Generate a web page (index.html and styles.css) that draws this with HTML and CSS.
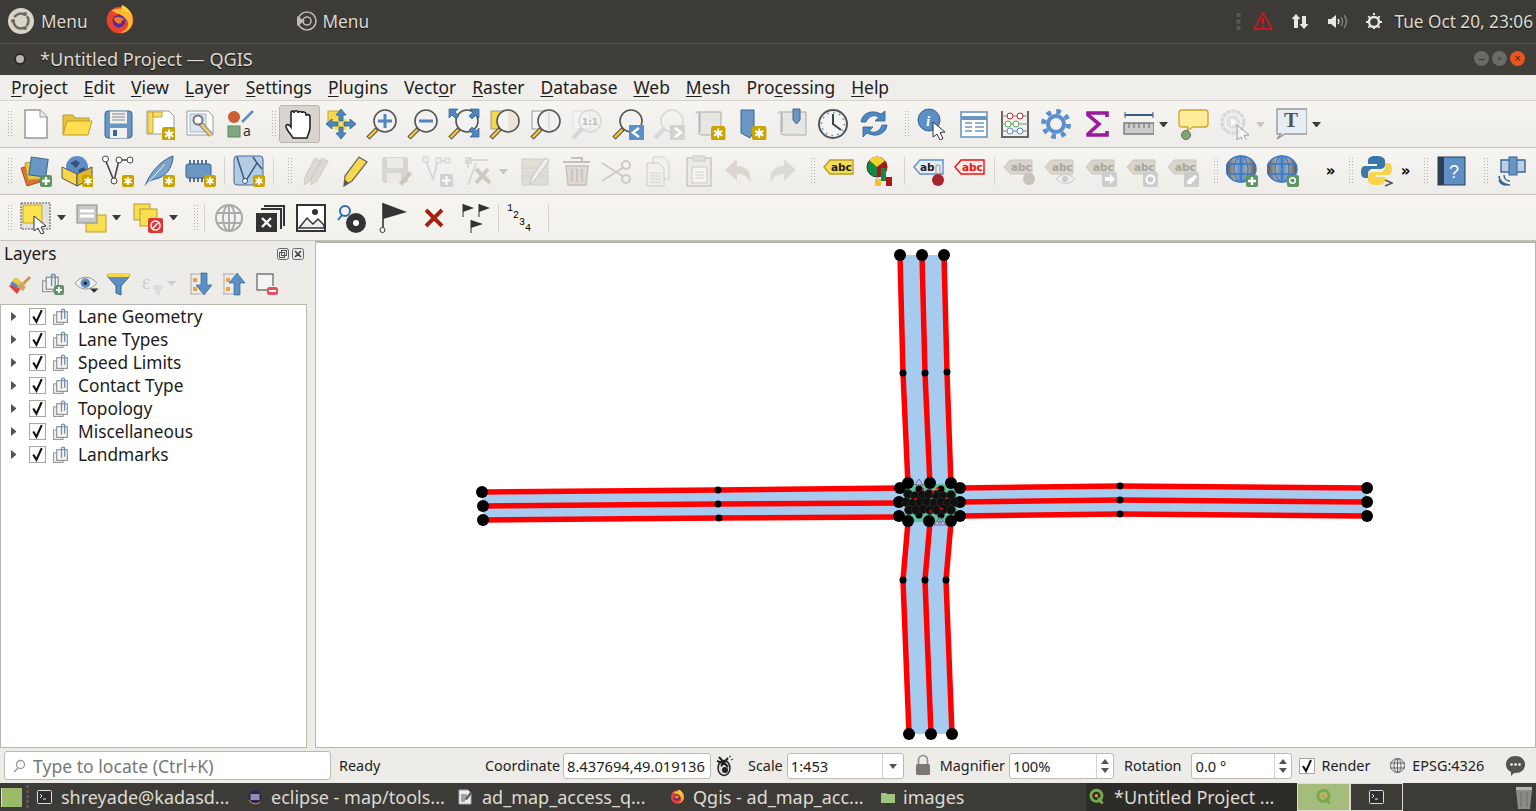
FILE: index.html
```html
<!DOCTYPE html>
<html lang="en">
<head>
<meta charset="utf-8">
<title>QGIS</title>
<link rel="stylesheet" href="styles.css">
</head>
<body>
<svg class="defs" width="0" height="0">
  <defs>
    <linearGradient id="gl" x1="0" x2="1" y1="0" y2="0"><stop offset="0" stop-color="#555"/><stop offset=".3" stop-color="#aaa"/><stop offset=".5" stop-color="#4f8bd0"/><stop offset=".7" stop-color="#aaa"/><stop offset="1" stop-color="#555"/></linearGradient>
    <g id="star"><rect x="0" y="0" width="12" height="12" rx="2" fill="#c9a400"/><path d="M6 2v8M2.500 4l7 4M9.500 4l-7 4" stroke="#fff" stroke-width="1.600"/><circle cx="6" cy="6" r="2" fill="#fff"/></g>
    <g id="mag"><path d="M2 30l9-9" stroke="#333" stroke-width="4.500"/><path d="M2.500 29.500l8-8" stroke="#f0c040" stroke-width="2.600"/><circle cx="19" cy="13" r="11" fill="#f2f2f0" stroke="#555" stroke-width="1.600"/></g>
    <g id="magoff" opacity=".45"><path d="M2 30l9-9" stroke="#bbb" stroke-width="4"/><circle cx="19" cy="13" r="11" fill="#f2f2f0" stroke="#bbb" stroke-width="1.600"/></g>
    <g id="abc"><path d="M1 12l6-7h22v14H7z" fill="#d8d5cc" stroke="#ccc8be"/><text x="8" y="16" class="tag-text" fill="#a8a59c">abc</text></g>
    <g id="grip"><path d="M.5 0v26M3.500 0v26" stroke="#b5b2ab" stroke-width="1" stroke-dasharray="1 2"/></g>
    <g id="globe"><ellipse cx="15" cy="14" rx="15" ry="13" fill="url(#gl)" stroke="#3b78c4" stroke-width="1.400"/><path d="M1 9h28M1 19h28M15 1v26" stroke="#3b78c4" stroke-width="1.300"/><ellipse cx="15" cy="14" rx="7" ry="13" fill="none" stroke="#3b78c4" stroke-width="1.200"/></g>
    <g id="ptr"><path d="M0 0l0 15 4-3 3 6 3-1.500-3-6 5-.5z" fill="#fff" stroke="#333" stroke-width="1"/></g>
    <g id="layerclip"><rect x=".5" y="6.500" width="9" height="9" fill="#eee" stroke="#999"/><rect x="3.500" y="3.500" width="10" height="10" fill="#f4f4f2" stroke="#888"/><path d="M8 11V2.500a1.500 1.500 0 0 1 3 0V10" fill="none" stroke="#6a8fb5" stroke-width="1.200"/></g>
    <g id="check"><rect x=".5" y=".5" width="15" height="15" fill="#fff" stroke="#aaa7a0"/><path d="M4 8l3 5 5-11" fill="none" stroke="#111" stroke-width="2"/></g>
    <g id="q"><circle cx="7.500" cy="7" r="5" fill="none" stroke="#78a94a" stroke-width="2.600"/><path d="M9 9l4 5" stroke="#78a94a" stroke-width="2.600"/><circle cx="7.500" cy="7" r="1.600" fill="#e8902a"/></g>
    <g id="term"><rect x=".5" y=".5" width="14" height="13" rx="1" fill="#2e2e2e" stroke="#ddd"/><path d="M3 4l2 2-2 2M6 9h3" stroke="#eee" fill="none"/></g>
    <g id="fox"><circle cx="14" cy="15" r="12.500" fill="#e8432e"/><path d="M6 6c6-3 13-3 19 5 3 8-2 16-11 16 6-2 9-6 7-11-1-3-4-3-7-3 2-2 0-4-3-4z" fill="#fcb831"/><path d="M16 1c5 2 9 7 10 12-2-4-5-6-8-6-3-1-3-4-2-6z" fill="#ffd43b"/><circle cx="13" cy="16" r="6" fill="#5a2a9a"/><path d="M8 14c3-3 8-2 10 1-2 0-3 1-3 3-2 1-5 0-7-4z" fill="#f57a1f"/></g>
  </defs>
</svg>

<header class="panel">
  <div class="panel-left">
    <span class="ubuntu"><svg width="26" height="26" viewBox="0 0 26 26"><circle cx="13" cy="13" r="13" fill="#d8d4c9"/><circle cx="13" cy="13" r="7.500" fill="none" stroke="#6b685f" stroke-width="2.500"/><path d="M13 13L2 9M13 13l8-9M13 13l7 9" stroke="#d8d4c9" stroke-width="2.500"/><circle cx="5" cy="13" r="2" fill="#6b685f"/><circle cx="17" cy="6" r="2" fill="#6b685f"/><circle cx="17" cy="20" r="2" fill="#6b685f"/></svg></span>
    <span class="panel-text">Menu</span>
    <svg class="panel-fox" width="30" height="32" viewBox="0 0 28 30"><use href="#fox"/></svg>
    <span class="panel-mid">
      <svg width="21" height="20" viewBox="0 0 21 20"><circle cx="11" cy="10" r="9" fill="none" stroke="#bdb9ae" stroke-width="1.600"/><circle cx="11" cy="10" r="4" fill="none" stroke="#bdb9ae" stroke-width="1.600"/><path d="M1 5l8 5-8 5z" fill="#bdb9ae"/></svg>
      <span class="panel-text">Menu</span>
    </span>
  </div>
  <div class="panel-right">
    <svg class="grip-v" width="5" height="17" viewBox="0 0 5 17"><path d="M2.500 0v17" stroke="#5a5851" stroke-width="4" stroke-dasharray="4 2.500"/></svg>
    <svg width="20" height="18" viewBox="0 0 20 18"><path d="M10 1L1 17h18z" fill="none" stroke="#e8101c" stroke-width="1.500"/><path d="M10 6v6M10 13.500v2" stroke="#e8101c" stroke-width="2"/></svg>
    <svg width="18" height="17" viewBox="0 0 18 17"><path d="M5 1l4.500 5H7v9H3V6H.5zM13 16l4.500-5H15V3h-4v8H8.500z" fill="#e8e6e0"/></svg>
    <svg width="21" height="17" viewBox="0 0 21 17"><path d="M1 6h3l5-4v13l-5-4H1z" fill="#e8e6e0"/><path d="M11 6c1 1.500 1 3.500 0 5" stroke="#e8e6e0" stroke-width="1.500" fill="none"/><path d="M14 4c2 3 2 6 0 9M17 2c3 4 3 9 0 13" stroke="#8a877e" stroke-width="1.300" fill="none"/></svg>
    <svg width="16" height="17" viewBox="0 0 16 17"><circle cx="8" cy="9" r="5" fill="none" stroke="#e8e6e0" stroke-width="2.400"/><path d="M8 0v17M0 9h16M2.300 3.300l11.400 11.400M13.700 3.300L2.300 14.700" stroke="#e8e6e0" stroke-width="2" stroke-dasharray="2 12"/></svg>
    <span class="panel-text clock">Tue Oct 20, 23:06</span>
  </div>
</header>

<div class="titlebar">
  <span class="title-dot"></span>
  <span class="title-text">*Untitled Project — QGIS</span>
  <span class="winbtns"><i class="winbtn">–</i><i class="winbtn">▫</i><i class="winbtn close">×</i></span>
</div>

<nav class="menubar">
  <span><u>P</u>roject</span><span><u>E</u>dit</span><span><u>V</u>iew</span><span><u>L</u>ayer</span><span><u>S</u>ettings</span><span><u>P</u>lugins</span><span>Vect<u>o</u>r</span><span><u>R</u>aster</span><span><u>D</u>atabase</span><span><u>W</u>eb</span><span><u>M</u>esh</span><span>Pro<u>c</u>essing</span><span><u>H</u>elp</span>
</nav>

<div class="toolbar tb1">
  <svg class="grip start" width="4" height="26" viewBox="0 0 4 26"><use href="#grip"/></svg>
  <span class="b"><svg viewBox="0 0 32 32"><path d="M5 2h15l7 7v21H5z" fill="#fff" stroke="#999" stroke-width="1.500"/><path d="M20 2v7h7" fill="#eee" stroke="#999"/></svg></span>
  <span class="b"><svg viewBox="0 0 32 32"><path d="M2 26V7h10l2 3h14v4" fill="#e8c040" stroke="#b89c30"/><path d="M2 27l4-14h25l-4 14z" fill="#ffdf50" stroke="#b89c30"/></svg></span>
  <span class="b"><svg viewBox="0 0 32 32"><rect x="3" y="3" width="27" height="27" rx="3" fill="#6a96c4" stroke="#3a6590"/><rect x="8" y="3.500" width="17" height="12" fill="#f0f0f0"/><path d="M10 6h13M10 9h13M10 12h13" stroke="#888"/><rect x="8" y="20" width="17" height="10" fill="#f0f0f0"/><rect x="11" y="22" width="4" height="6" fill="#3a6590"/></svg></span>
  <span class="b"><svg viewBox="0 0 32 32"><path d="M4 3h22l5 5v18H4z" fill="#fff" stroke="#999"/><path d="M5 4h5v21H5zM10 4h9v5h-9z" fill="#f7dd6a" stroke="#c8a830"/><use href="#star" transform="translate(19 19) scale(1.200)"/></svg></span>
  <span class="b"><svg viewBox="0 0 32 32"><path d="M3 3h21l5 5v19H3z" fill="#fff" stroke="#999"/><rect x="6" y="6" width="16" height="18" fill="#dbe6f3" stroke="#9cb5d2"/><path d="M15 14l12 13" stroke="#888" stroke-width="5"/><path d="M15 14l12 13" stroke="#e8cb70" stroke-width="3"/><circle cx="14" cy="12" r="4.500" fill="#fff" stroke="#777" stroke-width="2"/></svg></span>
  <span class="b"><svg viewBox="0 0 32 32"><circle cx="9" cy="9" r="6" fill="#c8602f"/><path d="M17 14L28 3" stroke="#5d8fc0" stroke-width="2.500"/><rect x="3" y="18" width="12" height="11" fill="#7fa97f" stroke="#5e865e"/><text x="18" y="28" class="a-text">a</text></svg></span>
  <svg class="grip" width="4" height="26" viewBox="0 0 4 26"><use href="#grip"/></svg>
  <span class="b on"><svg viewBox="0 0 32 32"><path d="M9 30c-2-4-7-8-7-12 0-2 3-2 5 1V5c0-2.500 3-2.500 3 0 0-3 4-3 4 0 0-2 4-2 4 0 0-2 4-1 4 1v2c0-2 4-2 4 1v10c0 5-2 7-3 11z" fill="#fff" stroke="#222" stroke-width="1.600"/></svg></span>
  <span class="b"><svg viewBox="0 0 32 32"><rect x="3" y="3" width="13" height="13" fill="#f4d84a" stroke="#c4a830"/><rect x="9" y="11" width="13" height="11" fill="#ffe24d"/><path d="M16 1l5 6h-3v6h-4V7h-3zM16 31l5-6h-3v-6h-4v6h-3zM1 16l6-5v3h6v4H7v3zM31 16l-6-5v3h-6v4h6v3z" fill="#4f86c0" stroke="#2e5f92" stroke-width=".8"/></svg></span>
  <span class="b"><svg viewBox="0 0 32 32"><use href="#mag"/><path d="M12 13h14M19 6v14" stroke="#4f86c0" stroke-width="3"/></svg></span>
  <span class="b"><svg viewBox="0 0 32 32"><use href="#mag"/><path d="M12 13h14" stroke="#4f86c0" stroke-width="3"/></svg></span>
  <span class="b"><svg viewBox="0 0 32 32"><use href="#mag"/><path d="M1 1h9L7 4l4 4-3 3-4-4-3 3zM31 1h-9l3 3-4 4 3 3 4-4 3 3zM31 29h-9l3-3-4-4 3-3 4 4 3-3z" fill="#4f86c0" stroke="#2e5f92" stroke-width=".7"/></svg></span>
  <span class="b"><svg viewBox="0 0 32 32"><rect x="2" y="3" width="17" height="18" fill="#f4d84a" stroke="#999"/><use href="#mag"/><path d="M19 3a10 10 0 0 1 0 20z" fill="#e8e5d4"/></svg></span>
  <span class="b"><svg viewBox="0 0 32 32"><rect x="2" y="3" width="17" height="18" fill="#f4f4f2" stroke="#999"/><use href="#mag"/><path d="M19 4v18" stroke="#ccc"/></svg></span>
  <span class="b"><svg viewBox="0 0 32 32"><rect x="2" y="3" width="17" height="18" fill="#f4f4f2" stroke="#ddd"/><use href="#magoff"/><text x="11" y="17" class="small-bold" fill="#bbb">1:1</text></svg></span>
  <span class="b"><svg viewBox="0 0 32 32"><use href="#mag"/><rect x="17" y="17" width="15" height="15" fill="#5a8fc8"/><path d="M27 20l-6 4.500 6 4.500" fill="none" stroke="#fff" stroke-width="2.400"/></svg></span>
  <span class="b"><svg viewBox="0 0 32 32"><use href="#magoff"/><rect x="17" y="17" width="15" height="15" fill="#d5d3cd"/><path d="M22 20l6 4.500-6 4.500" fill="none" stroke="#fff" stroke-width="2.400"/></svg></span>
  <span class="b"><svg viewBox="0 0 32 32"><path d="M5 4h22v23H9c-4 0-5-2-4-4z" fill="#e6e6e3" stroke="#aaa"/><path d="M2 6c0-3 4-3 4 0v18" fill="none" stroke="#aaa"/><use href="#star" transform="translate(17 18) scale(1.200)"/></svg></span>
  <span class="b"><svg viewBox="0 0 32 32"><path d="M6 2h13v21l-4 7-9-5z" fill="#6a96c4" stroke="#3a6590"/><use href="#star" transform="translate(17 18) scale(1.200)"/></svg></span>
  <span class="b"><svg viewBox="0 0 32 32"><path d="M5 4h25v23H9c-4 0-5-2-4-4z" fill="#e6e6e3" stroke="#aaa"/><path d="M2 6c0-3 4-3 4 0v18" fill="none" stroke="#aaa"/><path d="M17 1h7v11l-3.500 4-3.500-4z" fill="#6a96c4" stroke="#3a6590"/></svg></span>
  <span class="b"><svg viewBox="0 0 32 32"><circle cx="16" cy="16" r="14" fill="#f4f4f2" stroke="#555" stroke-width="2"/><path d="M16 6v10l8 6" fill="none" stroke="#444" stroke-width="2"/><circle cx="16" cy="16" r="11.500" fill="none" stroke="#5a8fc8" stroke-width="1.600" stroke-dasharray="1.500 4.500"/></svg></span>
  <span class="b"><svg viewBox="0 0 32 32"><path d="M3 14C4 5 14 1 23 6l4-3v10H17l4-4c-6-3-11 0-13 5zM29 17c-1 9-11 13-20 8l-4 4V19h10l-4 4c6 3 11 0 13-6z" fill="#4f86c8" stroke="#2e5f92" stroke-width=".8"/></svg></span>
  <svg class="grip" width="4" height="26" viewBox="0 0 4 26"><use href="#grip"/></svg>
  <span class="b"><svg viewBox="0 0 32 32"><circle cx="12" cy="12" r="11" fill="#5b8fc6" stroke="#3a6590"/><text x="9" y="18" class="info-text">i</text><use href="#ptr" transform="translate(16 14)"/></svg></span>
  <span class="b"><svg viewBox="0 0 32 32"><rect x="3" y="4" width="26" height="25" fill="#fff" stroke="#6a96c4" stroke-width="1.600"/><path d="M3 10h26" stroke="#6a96c4" stroke-width="4"/><path d="M7 15h7M17 15h9M7 19h7M17 19h9M7 23h7M17 23h9" stroke="#6a96c4" stroke-width="1.600"/></svg></span>
  <span class="b"><svg viewBox="0 0 32 32"><path d="M3 3v26M29 3v26M2 29h28" stroke="#666" stroke-width="2"/><path d="M3 8h26M3 16h26M3 23h26" stroke="#888"/><circle cx="11" cy="8" r="3" fill="#fff" stroke="#b22"/><circle cx="21" cy="8" r="3" fill="#fff" stroke="#b22"/><circle cx="9" cy="16" r="3" fill="#fff" stroke="#5a5"/><circle cx="17" cy="16" r="3" fill="#fff" stroke="#5a5"/><circle cx="11" cy="23" r="3" fill="#fff" stroke="#58c"/><circle cx="21" cy="23" r="3" fill="#fff" stroke="#58c"/></svg></span>
  <span class="b"><svg viewBox="0 0 32 32"><circle cx="16" cy="16" r="8" fill="none" stroke="#5b8fd0" stroke-width="4"/><circle cx="16" cy="16" r="12.500" fill="none" stroke="#5b8fd0" stroke-width="5" stroke-dasharray="4.500 5.300"/></svg></span>
  <span class="b"><svg viewBox="0 0 32 32"><path d="M26 9V5H7v2l11 9-11 10v1h19v-4" fill="none" stroke="#9a1a9a" stroke-width="3.600"/></svg></span>
  <span class="b"><svg viewBox="0 0 32 32"><path d="M3 7h28" stroke="#3b5c80" stroke-width="2"/><path d="M3 4v6M31 4v6" stroke="#3b5c80"/><rect x="2" y="15" width="30" height="11" fill="#ccc" stroke="#777" stroke-width="1.400"/><path d="M7 15v5M12 15v5M17 15v5M22 15v5M27 15v5" stroke="#666"/></svg></span><i class="caret"></i>
  <span class="b"><svg viewBox="0 0 32 32"><path d="M4 2h23a3 3 0 0 1 3 3v11a3 3 0 0 1-3 3H15l-6 4 1-4H4a3 3 0 0 1-3-3V5a3 3 0 0 1 3-3z" fill="#ffec9a" stroke="#cbaa2c" stroke-width="1.400"/><circle cx="8" cy="27" r="4.500" fill="#7ea86e" stroke="#666"/></svg></span>
  <span class="b"><svg viewBox="0 0 32 32" opacity=".7"><circle cx="14" cy="14" r="11" fill="#eee" stroke="#ccc" stroke-width="3" stroke-dasharray="4 1"/><circle cx="14" cy="14" r="6" fill="#ddd" stroke="#ccc"/><path d="M12 10l6 4-6 4z" fill="#fff"/><use href="#ptr" transform="translate(18 17)" opacity=".6"/></svg></span><i class="caret off"></i>
  <span class="b"><svg viewBox="0 0 32 32"><path d="M2 1h30v25H10l-8 5 4-5H2z" fill="#e6eef5" stroke="#999" stroke-width="1.400"/><text x="9" y="19" class="t-text">T</text></svg></span><i class="caret"></i>
</div>

<div class="toolbar tb2">
  <svg class="grip start" width="4" height="26" viewBox="0 0 4 26"><use href="#grip"/></svg>
  <span class="b"><svg viewBox="0 0 32 32"><path d="M1 13l14-4 5 18-13 4z" fill="#d97332" stroke="#a55420"/><path d="M5 8l13-2 3 18-13 1z" fill="#e8c84a" stroke="#b89c30"/><rect x="10" y="3" width="17" height="18" transform="rotate(8 18 12)" fill="#6a96c4" stroke="#3a6590"/><rect x="20" y="20" width="12" height="12" rx="2" fill="#5f9464"/><path d="M26 22v8M22 26h8" stroke="#fff" stroke-width="2.400"/></svg></span>
  <span class="b"><svg viewBox="0 0 32 32"><circle cx="16" cy="12" r="11" fill="#5f8ec4"/><path d="M9 8l6-3 4 3-4 5zM17 15l6-3 2 4-5 4z" fill="#33547c"/><path d="M1 12l15 7v12L1 23z" fill="#f4d84a" stroke="#555"/><path d="M31 12l-15 7v12l15-8z" fill="#e0b830" stroke="#555"/><use href="#star" transform="translate(21 20)"/></svg></span>
  <span class="b"><svg viewBox="0 0 32 32"><path d="M3 4l9 22L17 5l10 0" fill="none" stroke="#444" stroke-width="1.600"/><circle cx="3.500" cy="4" r="3" fill="#fff" stroke="#444"/><circle cx="12" cy="26" r="3" fill="#fff" stroke="#444"/><circle cx="17" cy="5" r="3" fill="#fff" stroke="#444"/><circle cx="28" cy="5" r="3" fill="#fff" stroke="#444"/><use href="#star" transform="translate(20 20)"/></svg></span>
  <span class="b"><svg viewBox="0 0 32 32"><path d="M2 31C6 20 16 6 30 1c0 8-4 18-14 22-4 1-8 2-11 4z" fill="#7ba2c8" stroke="#3a6590"/><path d="M2 31L22 9" stroke="#e8f0f8"/><use href="#star" transform="translate(20 20)"/></svg></span>
  <span class="b"><svg viewBox="0 0 32 32"><rect x="2" y="9" width="25" height="14" rx="2" fill="#6a96c4" stroke="#3a6590"/><path d="M6 5v4M10 5v4M14 5v4M18 5v4M22 5v4M6 23v4M10 23v4M14 23v4M18 23v4" stroke="#33547c" stroke-width="1.600"/><use href="#star" transform="translate(20 20)"/></svg></span>
  <i class="sep"></i>
  <span class="b"><svg viewBox="0 0 32 32"><rect x="1" y="1" width="29" height="29" rx="3" fill="#b4cbe2" stroke="#446b93"/><path d="M4 2l8 25L24 8 20 2M24 8l5 6" fill="none" stroke="#33547c" stroke-width="1.400"/><circle cx="12" cy="26" r="2.500" fill="#fff" stroke="#33547c"/><use href="#star" transform="translate(20 20)"/></svg></span>
  <i class="sep"></i>
  <svg class="grip" width="4" height="26" viewBox="0 0 4 26"><use href="#grip"/></svg>
  <span class="b dim tight"><svg viewBox="0 0 32 32"><path d="M4 30l1-8L15 3l6 3-11 20zM11 30l1-8L22 3l6 3-11 20z" fill="#d8d5ce" stroke="#c8c5be"/></svg></span>
  <span class="b"><svg viewBox="0 0 32 32"><path d="M5 31l1-10L20 2l8 5-15 19z" fill="#f7d94c" stroke="#6b6b60" stroke-width="1.300"/><path d="M5 31l1-6 4 3z" fill="#555"/></svg></span>
  <span class="b dim"><svg viewBox="0 0 32 32"><rect x="2" y="2" width="26" height="26" rx="3" fill="#d4d2cc"/><rect x="7" y="3" width="16" height="10" fill="#eceae6"/><rect x="7" y="18" width="14" height="10" fill="#eceae6"/><path d="M19 28l10-12 3 3-10 12z" fill="#c8c0b6"/></svg></span>
  <span class="b dim"><svg viewBox="0 0 32 32"><path d="M4 4l8 20 5-18h12" fill="none" stroke="#ccc" stroke-width="1.500"/><rect x="2" y="2" width="5" height="5" fill="#eee" stroke="#ccc"/><rect x="15" y="3" width="5" height="5" fill="#eee" stroke="#ccc"/><rect x="24" y="3" width="5" height="5" fill="#eee" stroke="#ccc"/><rect x="19" y="19" width="13" height="13" rx="2" fill="#ccc"/><path d="M25.500 21v9M21 25.500h9" stroke="#fff" stroke-width="2"/></svg></span>
  <span class="b dim"><svg viewBox="0 0 32 32"><path d="M6 5h20M6 5v8M4 3h5v5H4zM6 30l8-22" fill="none" stroke="#ccc" stroke-width="1.400"/><path d="M14 14l14 14M26 14L14 28" stroke="#c8c4bc" stroke-width="4"/></svg></span><i class="caret off"></i>
  <span class="b dim"><svg viewBox="0 0 32 32"><rect x="3" y="4" width="26" height="8" fill="#dedbd0" stroke="#ccc"/><rect x="3" y="13" width="26" height="8" fill="#dedbd0" stroke="#ccc"/><rect x="3" y="22" width="26" height="8" fill="#dedbd0" stroke="#ccc"/><path d="M10 30l3-8L26 3l4 3-14 19z" fill="#eee" stroke="#bbb"/></svg></span>
  <span class="b dim"><svg viewBox="0 0 32 32"><path d="M6 11h22l-2 19H8z" fill="#ddd5cf" stroke="#c0b6b0" stroke-width="1.400"/><path d="M3 7h27M11 3h11v4" fill="none" stroke="#c0b6b0" stroke-width="2"/><path d="M12 14v13M17 14v13M22 14v13" stroke="#c0b6b0" stroke-width="1.600"/></svg></span>
  <span class="b dim"><svg viewBox="0 0 32 32"><path d="M1 8l22 14M1 26l22-14" stroke="#c8c5be" stroke-width="2"/><circle cx="25" cy="10" r="4" fill="none" stroke="#c8c5be" stroke-width="2"/><circle cx="25" cy="24" r="4" fill="none" stroke="#c8c5be" stroke-width="2"/></svg></span>
  <span class="b dim"><svg viewBox="0 0 32 32"><path d="M11 2h11l5 5v17H11z" fill="#f2f0ec" stroke="#ccc"/><path d="M5 8h12l5 5v18H5z" fill="#f2f0ec" stroke="#c8c5be"/><path d="M8 18h11M8 21h11M8 24h11M8 27h11" stroke="#ccc"/></svg></span>
  <span class="b dim"><svg viewBox="0 0 32 32"><rect x="4" y="3" width="24" height="28" fill="#eceae6" stroke="#c8c5be" stroke-width="1.600"/><rect x="10" y="1" width="12" height="5" fill="#ddd" stroke="#c8c5be"/><path d="M9 12h15v16H9z" fill="#f6f5f2" stroke="#c8c5be"/><path d="M12 17h9M12 20h9M12 23h9" stroke="#ccc"/></svg></span>
  <span class="b dim"><svg viewBox="0 0 32 32"><path d="M13 4v7c9 0 15 5 13 17-2-7-6-9-13-9v7L1 15z" fill="#d8d2cc"/></svg></span>
  <span class="b dim"><svg viewBox="0 0 32 32"><path d="M19 4v7c-9 0-15 5-13 17 2-7 6-9 13-9v7l12-11z" fill="#d6d6d2"/></svg></span>
  <svg class="grip near" width="4" height="26" viewBox="0 0 4 26"><use href="#grip"/></svg>
  <span class="b"><svg viewBox="0 0 32 32"><path d="M1 12l6-7h23v14H7z" fill="#f4df50" stroke="#b89c30" stroke-width="1.400"/><text x="8" y="16" class="tag-text" fill="#222">abc</text></svg></span>
  <span class="b"><svg viewBox="0 0 32 32"><circle cx="13" cy="12" r="10" fill="#118a44" stroke="#333"/><path d="M13 12L5 5a10 10 0 0 1 16 1z" fill="#f4d030"/><path d="M13 12l8-6a10 10 0 0 1-8 16z" fill="#a81a1a"/><rect x="17" y="13" width="5" height="13" fill="#118a44"/><rect x="11" y="24" width="6" height="7" fill="#f4c030"/><rect x="22" y="22" width="6" height="9" fill="#a81a1a"/></svg></span>
  <i class="sep"></i>
  <span class="b"><svg viewBox="0 0 32 32"><path d="M1 12l6-7h23v14H7z" fill="#e6eef8" stroke="#5b8fd0" stroke-width="1.400"/><text x="7" y="16" class="tag-text" fill="#222">ab</text><path d="M23 20v-8a2 2 0 0 1 4 0v8" fill="none" stroke="#aaa" stroke-width="1.400"/><circle cx="25" cy="25" r="6" fill="#a8232d"/></svg></span>
  <span class="b"><svg viewBox="0 0 32 32"><path d="M1 12l6-7h23v14H7z" fill="#fdeaea" stroke="#f01010" stroke-width="1.400"/><text x="8" y="16" class="tag-text" fill="#f01010">abc</text></svg></span>
  <i class="sep"></i>
  <span class="b"><svg viewBox="0 0 32 32"><use href="#abc"/><circle cx="26" cy="24" r="6" fill="#c8c0ba"/></svg></span>
  <span class="b"><svg viewBox="0 0 32 32"><use href="#abc"/><path d="M12 24c6-6 13-6 19 0-6 6-13 6-19 0z" fill="#f0eeea" stroke="#ccc"/><circle cx="21" cy="24" r="3" fill="#ccc"/></svg></span>
  <span class="b"><svg viewBox="0 0 32 32"><use href="#abc"/><rect x="17" y="17" width="15" height="15" rx="2" fill="#ccc"/><path d="M20 22h5v-3l5 5-5 5v-3h-5z" fill="#fff"/></svg></span>
  <span class="b"><svg viewBox="0 0 32 32"><use href="#abc"/><rect x="17" y="17" width="15" height="15" rx="2" fill="#ccc"/><circle cx="24.500" cy="24.500" r="4" fill="none" stroke="#fff" stroke-width="2"/></svg></span>
  <span class="b"><svg viewBox="0 0 32 32"><use href="#abc"/><rect x="17" y="17" width="15" height="15" rx="2" fill="#ccc"/><path d="M20 29l1-4 7-5 2 2-6 7z" fill="#fff"/></svg></span>
  <svg class="grip" width="4" height="26" viewBox="0 0 4 26"><use href="#grip"/></svg>
  <span class="b"><svg viewBox="0 0 32 32"><use href="#globe"/><rect x="20" y="20" width="12" height="12" rx="2" fill="#5f9464"/><path d="M26 22v8M22 26h8" stroke="#fff" stroke-width="2.400"/></svg></span>
  <span class="b"><svg viewBox="0 0 32 32"><use href="#globe"/><rect x="20" y="20" width="12" height="12" rx="2" fill="#5f9464"/><circle cx="25.500" cy="25.500" r="2.800" fill="none" stroke="#fff" stroke-width="1.500"/></svg></span>
  <span class="more first">»</span>
  <svg class="grip near" width="4" height="26" viewBox="0 0 4 26"><use href="#grip"/></svg>
  <span class="b"><svg viewBox="0 0 32 32"><path d="M15 1c-6 0-8 2-8 5v3h9v2H4c-3 0-4 3-4 6s1 6 4 6h3v-4c0-3 2-5 5-5h7c3 0 5-2 5-4V6c0-3-3-5-9-5z" fill="#3b77a8"/><path d="M16 30c6 0 8-2 8-5v-3h-9v-2h12c3 0 4-3 4-6s-1-6-4-6h-3v4c0 3-2 5-5 5h-7c-3 0-5 2-5 4v4c0 3 3 5 9 5z" fill="#f8d44c"/><path d="M24 25l7 3-7 3" fill="none" stroke="#555" stroke-width="1.500"/></svg></span>
  <span class="more">»</span>
  <svg class="grip near" width="4" height="26" viewBox="0 0 4 26"><use href="#grip"/></svg>
  <span class="b"><svg viewBox="0 0 32 32"><rect x="2" y="2" width="27" height="28" fill="#5f8fc4" stroke="#2b3f55"/><rect x="2" y="2" width="6" height="28" fill="#2b3f55"/><text x="13" y="23" class="q-text">?</text></svg></span>
  <svg class="grip far" width="4" height="26" viewBox="0 0 4 26"><use href="#grip"/></svg>
  <span class="b"><svg viewBox="0 0 32 32"><path d="M4 5h24v12H4z" fill="#b9d0e6" stroke="#3a6590" stroke-width="1.400"/><rect x="12" y="2" width="8" height="18" fill="#6a96c4" stroke="#3a6590"/><path d="M2 21c0 5 5 9 11 9M2 25c1 3 4 5 8 5M7 20c0 4 3 6 6 6" fill="none" stroke="#3a6590" stroke-width="1.500"/></svg></span>
</div>

<div class="toolbar tb3">
  <svg class="grip start" width="4" height="26" viewBox="0 0 4 26"><use href="#grip"/></svg>
  <span class="b"><svg viewBox="0 0 32 32"><rect x="1" y="1" width="29" height="26" fill="#e4e2de" stroke="#555" stroke-dasharray="2 1"/><rect x="3" y="3" width="19" height="18" fill="#fae34f" stroke="#c4a830"/><path d="M14 14v15l4-3 3 6 3-1-3-6 5-1z" fill="#fff" stroke="#333"/></svg></span><i class="caret pull"></i>
  <span class="b"><svg viewBox="0 0 32 32"><rect x="11" y="13" width="20" height="17" fill="#f7df50" stroke="#b89c30"/><rect x="2" y="3" width="20" height="18" fill="#c8c8c8" stroke="#888"/><path d="M5 9h14M5 14h14" stroke="#fff" stroke-width="3"/></svg></span><i class="caret"></i>
  <span class="b"><svg viewBox="0 0 32 32"><rect x="2" y="2" width="16" height="16" fill="#f7df50" stroke="#b89c30"/><rect x="8" y="7" width="17" height="17" fill="#f7df50" stroke="#b89c30"/><rect x="16" y="16" width="15" height="15" rx="2" fill="#e03535"/><circle cx="23.500" cy="23.500" r="4.500" fill="none" stroke="#fff" stroke-width="1.500"/><path d="M20 27l7-7" stroke="#fff" stroke-width="1.500"/></svg></span><i class="caret"></i>
  <svg class="grip wide-r" width="4" height="26" viewBox="0 0 4 26"><use href="#grip"/></svg>
  <i class="sep after"></i>
  <span class="b"><svg viewBox="0 0 32 32"><circle cx="16" cy="16" r="13" fill="none" stroke="#aaa" stroke-width="2"/><ellipse cx="16" cy="16" rx="6" ry="13" fill="none" stroke="#aaa" stroke-width="2"/><path d="M3 11h26M3 21h26M16 3v26" stroke="#aaa" stroke-width="2"/></svg></span>
  <span class="b"><svg viewBox="0 0 32 32"><path d="M10 4h20v20M7 7h20v20" fill="none" stroke="#333" stroke-width="2"/><rect x="2" y="11" width="21" height="19" fill="#333"/><path d="M8 16l9 9M17 16l-9 9" stroke="#fff" stroke-width="2.400"/></svg></span>
  <span class="b"><svg viewBox="0 0 32 32"><rect x="2" y="3" width="28" height="26" fill="#fff" stroke="#333" stroke-width="2"/><path d="M4 26l8-10 6 6 5-5 6 6v3H4z" fill="#ededed" stroke="#333" stroke-width="1.500"/><circle cx="20" cy="10" r="3" fill="#333"/></svg></span>
  <span class="b"><svg viewBox="0 0 32 32"><circle cx="20" cy="21" r="10" fill="#333"/><circle cx="20" cy="21" r="3" fill="#fff"/><circle cx="9" cy="9" r="5" fill="none" stroke="#2e6bb0" stroke-width="2"/><path d="M6 13l-4 5" stroke="#2e6bb0" stroke-width="2"/></svg></span>
  <span class="b"><svg viewBox="0 0 32 32"><path d="M6 1v28" stroke="#333" stroke-width="1.600"/><path d="M6 1l24 9-24 7z" fill="#333"/><circle cx="5.500" cy="28" r="2.500" fill="#fff" stroke="#333"/></svg></span>
  <span class="b"><svg viewBox="0 0 32 32"><path d="M8 8l16 16M24 8L8 24" stroke="#fff" stroke-width="6.500"/><path d="M8 8l16 16M24 8L8 24" stroke="#a6200e" stroke-width="4"/></svg></span>
  <span class="b"><svg viewBox="0 0 32 32"><path d="M4 2v13M20 2v13M12 18v13" stroke="#333"/><path d="M4 2l11 4-11 4zM20 2l11 4-11 4zM12 18l12 4-12 4z" fill="#333"/></svg></span>
  <i class="sep flush"></i>
  <span class="b"><svg viewBox="0 0 32 32"><text x="3" y="9" class="num-text">1</text><text x="9" y="16" class="num-text">2</text><text x="15" y="23" class="num-text">3</text><text x="21" y="29" class="num-text">4</text></svg></span>
  <i class="sep wide-l"></i>
</div>

<main class="workspace">
  <aside class="dock">
    <div class="dock-head">
      <span>Layers</span>
      <span class="dock-btns"><svg width="12" height="12" viewBox="0 0 12 12"><rect x=".5" y=".5" width="11" height="11" rx="2" fill="none" stroke="#666"/><rect x="4.500" y="2.500" width="5" height="5" fill="none" stroke="#555"/><rect x="2.500" y="4.500" width="5" height="5" fill="none" stroke="#555"/></svg><svg width="12" height="12" viewBox="0 0 12 12"><rect x=".5" y=".5" width="11" height="11" rx="2" fill="none" stroke="#666"/><path d="M3 3l6 6M9 3l-6 6" stroke="#444" stroke-width="1.600"/></svg></span>
    </div>
    <div class="dock-tools">
      <svg viewBox="0 0 24 24"><path d="M1 14l6-5 6 7-4 6z" fill="#e04040"/><path d="M2 12l5-6 6 6-4 4z" fill="#4a90d0"/><path d="M4 9l4-4 6 5-3 4z" fill="#f0c840"/><path d="M9 15l4-5 5 5-3 4z" fill="#d0a468"/><path d="M15 12l7-7" stroke="#c89858" stroke-width="3"/></svg>
      <svg viewBox="0 0 24 24"><g transform="translate(1 1) scale(1.200)"><use href="#layerclip"/></g><rect x="13" y="13" width="10" height="10" rx="2" fill="#5f9464"/><path d="M18 15v6M15 18h6" stroke="#fff" stroke-width="2"/></svg>
      <svg class="w" viewBox="0 0 32 24"><path d="M1 11c7-9 18-9 25 0-7 9-18 9-25 0z" fill="#f2f2f0" stroke="#888"/><circle cx="13" cy="11" r="5.500" fill="#5b8fc6"/><circle cx="13" cy="11" r="2" fill="#222"/><path d="M18 17h10l-5 5z" fill="#333"/></svg>
      <svg viewBox="0 0 24 24"><path d="M1 2h21v3l-8 9v9l-5-2v-7L1 5z" fill="#5b8fc6" stroke="#3a6590"/><rect x="1" y="1" width="21" height="4" fill="#f4d84a"/></svg>
      <svg class="w off" viewBox="0 0 36 24"><text x="1" y="17" class="eps-text">ε</text><path d="M12 13h10v3l-3 3v4h-4v-4l-3-3z" fill="#ddd"/><path d="M26 9h9l-4.500 5z" fill="#ccc"/></svg>
      <svg viewBox="0 0 24 24"><path d="M1 2h11M1 22h11M2 2v20" stroke="#aaa" fill="none"/><rect x="4" y="6" width="4" height="4" fill="#f0a040"/><rect x="4" y="15" width="4" height="4" fill="#f0a040"/><path d="M12 1h6v12h5l-8 10-8-10h5z" fill="#5b8fc6" stroke="#3a6590" stroke-width=".7"/></svg>
      <svg viewBox="0 0 24 24"><path d="M1 2h11M1 22h11M2 2v20" stroke="#aaa" fill="none"/><rect x="4" y="6" width="4" height="4" fill="#f0a040"/><rect x="4" y="15" width="4" height="4" fill="#f0a040"/><path d="M12 23h6V11h5L15 1 7 11h5z" fill="#5b8fc6" stroke="#3a6590" stroke-width=".7"/></svg>
      <svg viewBox="0 0 24 24"><path d="M17 18H2V2h16v12" fill="#f4f4f2" stroke="#777" stroke-width="1.400"/><rect x="12" y="15" width="11" height="8" rx="2.500" fill="#e85060"/><path d="M14 19h7" stroke="#fff" stroke-width="2"/></svg>
    </div>
    <ul class="tree">
      <li><i class="arrow"></i><svg class="cb" viewBox="0 0 16 16"><use href="#check"/></svg><svg class="lay" viewBox="0 0 16 16"><use href="#layerclip"/></svg><span>Lane Geometry</span></li>
      <li><i class="arrow"></i><svg class="cb" viewBox="0 0 16 16"><use href="#check"/></svg><svg class="lay" viewBox="0 0 16 16"><use href="#layerclip"/></svg><span>Lane Types</span></li>
      <li><i class="arrow"></i><svg class="cb" viewBox="0 0 16 16"><use href="#check"/></svg><svg class="lay" viewBox="0 0 16 16"><use href="#layerclip"/></svg><span>Speed Limits</span></li>
      <li><i class="arrow"></i><svg class="cb" viewBox="0 0 16 16"><use href="#check"/></svg><svg class="lay" viewBox="0 0 16 16"><use href="#layerclip"/></svg><span>Contact Type</span></li>
      <li><i class="arrow"></i><svg class="cb" viewBox="0 0 16 16"><use href="#check"/></svg><svg class="lay" viewBox="0 0 16 16"><use href="#layerclip"/></svg><span>Topology</span></li>
      <li><i class="arrow"></i><svg class="cb" viewBox="0 0 16 16"><use href="#check"/></svg><svg class="lay" viewBox="0 0 16 16"><use href="#layerclip"/></svg><span>Miscellaneous</span></li>
      <li><i class="arrow"></i><svg class="cb" viewBox="0 0 16 16"><use href="#check"/></svg><svg class="lay" viewBox="0 0 16 16"><use href="#layerclip"/></svg><span>Landmarks</span></li>
    </ul>
  </aside>
  <div class="splitter"></div>
  <section class="canvas">
    <svg class="map" viewBox="315 243 1221 505" preserveAspectRatio="none">
      <path d="M900 255h44l3 117 4 111 9 5 160-2 247 2v28l-247-2-160 2-9 6-5 58 6 154h-43l-6-154 5-58-9-5-180 1-236 2-1-28 236-2 182-2 8-3-5-112z" fill="#a6cbef"/>
      <path d="M905 484h52v38h-52z" fill="#5cc3a0"/>
      <g fill="none" stroke="#ff0000" stroke-width="5.500">
        <path d="M900 255l3 118 5 112M922 255l3 118 5 112M944 255l3 118 4 112"/>
        <path d="M909 734l-6-154 5-58M931 734l-6-154 5-58M952 734l-6-154 5-58"/>
        <path d="M482 492l236-2 182-2M483 506l235-2 181-1M483 520l236-2 180-1"/>
        <path d="M960 488l160-2 247 2M960 502l160-2 247 2M960 516l160-2 247 2"/>
      </g>
      <g fill="#000">
        <circle cx="900" cy="255" r="6"/><circle cx="922" cy="255" r="6"/><circle cx="944" cy="255" r="6"/>
        <circle cx="903" cy="373" r="3.500"/><circle cx="925" cy="373" r="3.500"/><circle cx="947" cy="372" r="3.500"/>
        <circle cx="903" cy="580" r="3.500"/><circle cx="925" cy="580" r="3.500"/><circle cx="946" cy="580" r="3.500"/>
        <circle cx="909" cy="734" r="6"/><circle cx="931" cy="734" r="6"/><circle cx="952" cy="734" r="6"/>
        <circle cx="482" cy="492" r="6"/><circle cx="483" cy="506" r="6"/><circle cx="483" cy="520" r="6"/>
        <circle cx="718" cy="490" r="3.500"/><circle cx="718" cy="504" r="3.500"/><circle cx="719" cy="518" r="3.500"/>
        <circle cx="1120" cy="486" r="3.500"/><circle cx="1120" cy="500" r="3.500"/><circle cx="1120" cy="514" r="3.500"/>
        <circle cx="1367" cy="488" r="6"/><circle cx="1367" cy="502" r="6"/><circle cx="1367" cy="516" r="6"/>
        <circle cx="908" cy="483" r="6"/><circle cx="930" cy="483" r="6"/><circle cx="951" cy="483" r="6"/>
        <circle cx="900" cy="488" r="6"/><circle cx="899" cy="502" r="6"/><circle cx="899" cy="516" r="6"/>
        <circle cx="960" cy="488" r="6"/><circle cx="960" cy="502" r="6"/><circle cx="960" cy="516" r="6"/>
        <circle cx="908" cy="521" r="6"/><circle cx="929" cy="521" r="6"/><circle cx="951" cy="521" r="6"/>
        <circle cx="919" cy="489" r="3.500"/><circle cx="941" cy="489" r="3.500"/><circle cx="919" cy="515" r="3.500"/><circle cx="941" cy="515" r="3.500"/>
      </g>
      <g fill="#101010" stroke="#333" stroke-width=".6">
        <circle cx="908" cy="494" r="4.500"/><circle cx="915" cy="496" r="4.500"/><circle cx="922" cy="495" r="4.500"/><circle cx="929" cy="494" r="4.500"/><circle cx="936" cy="495" r="4.500"/><circle cx="943" cy="496" r="4.500"/><circle cx="951" cy="495" r="4.500"/>
        <circle cx="906" cy="502" r="4.500"/><circle cx="913" cy="503" r="4.500"/><circle cx="920" cy="502" r="4.500"/><circle cx="927" cy="502" r="4.500"/><circle cx="934" cy="503" r="4.500"/><circle cx="941" cy="502" r="4.500"/><circle cx="948" cy="503" r="4.500"/><circle cx="954" cy="502" r="4.500"/>
        <circle cx="909" cy="510" r="4.500"/><circle cx="916" cy="510" r="4.500"/><circle cx="923" cy="509" r="4.500"/><circle cx="930" cy="510" r="4.500"/><circle cx="937" cy="510" r="4.500"/><circle cx="944" cy="509" r="4.500"/><circle cx="951" cy="510" r="4.500"/>
      </g>
      <g fill="none" stroke="#e01010" stroke-width="1.500">
        <path d="M923 488v3M932 490l2 4M930 510l2 4M914 499h3M945 498h3M940 508l3 1M936 488l3 1"/>
      </g>
      <g fill="none" stroke="#8a5a9a" stroke-width="1">
        <path d="M919 479l4 6h-8zM940 517l6 8h-12zM940 521l2 2h-4z"/>
      </g>
    </svg>
  </section>
</main>

<footer class="status">
  <label class="locator"><svg width="13" height="14" viewBox="0 0 13 14"><circle cx="7.500" cy="5.500" r="4" fill="none" stroke="#9a9a96" stroke-width="1.300"/><path d="M5 9l-4 4" stroke="#9a9a96" stroke-width="1.500"/></svg><span>Type to locate (Ctrl+K)</span></label>
  <span class="ready">Ready</span>
  <span class="lbl coord-l">Coordinate</span>
  <span class="field coord">8.437694,49.019136</span>
  <svg class="mouse" width="20" height="22" viewBox="0 0 20 22"><ellipse cx="9" cy="13" rx="6" ry="7.500" fill="#ddd" stroke="#222" stroke-width="1.500"/><circle cx="10" cy="15" r="3" fill="#222"/><path d="M4 2l9 10M13 3L6 11M2 6l8 3" stroke="#222" stroke-width="2"/><path d="M14 2l2-1M16 5l2-1" stroke="#222"/></svg>
  <span class="lbl">Scale</span>
  <span class="field scale"><span>1:453</span><i class="combo"></i></span>
  <svg class="lock" width="16" height="23" viewBox="0 0 16 23"><path d="M3.500 11V6a4.500 4.500 0 0 1 9 0v5" fill="none" stroke="#8e8c86" stroke-width="1.600"/><rect x="1" y="10" width="14" height="11" rx="1.500" fill="#7a7873"/></svg>
  <span class="lbl">Magnifier</span>
  <span class="field spin magn"><span>100%</span><i class="spinner"></i></span>
  <span class="lbl rot">Rotation</span>
  <span class="field spin rota"><span>0.0 °</span><i class="spinner"></i></span>
  <svg class="rcb" width="16" height="16" viewBox="0 0 16 16"><use href="#check"/></svg>
  <span class="lbl render">Render</span>
  <svg class="crs" width="17" height="17" viewBox="0 0 17 17"><circle cx="8.500" cy="8.500" r="7" fill="none" stroke="#666"/><ellipse cx="8.500" cy="8.500" rx="3.500" ry="7" fill="none" stroke="#666"/><path d="M1 6h15M1 11h15M8.500 1v15" stroke="#666"/></svg>
  <span class="lbl epsg">EPSG:4326</span>
  <svg class="msg" width="21" height="21" viewBox="0 0 21 21"><path d="M10.500 1c5.500 0 9.500 3.500 9.500 8.500S16 18 10.500 18H9l-3 3v-4C3 15.500 1 13 1 9.500 1 4.500 5 1 10.500 1z" fill="#55534e"/><circle cx="6.500" cy="9.500" r="1.300" fill="#fff"/><circle cx="10.500" cy="9.500" r="1.300" fill="#fff"/><circle cx="14.500" cy="9.500" r="1.300" fill="#fff"/></svg>
</footer>

<footer class="taskbar">
  <span class="showdesk"></span>
  <svg class="tgrip" width="5" height="24" viewBox="0 0 5 24"><path d="M2.500 0v24" stroke="#5a5851" stroke-width="3" stroke-dasharray="3 2"/></svg>
  <span class="task t1"><svg width="15" height="14" viewBox="0 0 15 14"><use href="#term"/></svg><span class="nm">shreyade@kadasd...</span></span>
  <span class="task t2"><svg width="14" height="16" viewBox="0 0 14 16"><circle cx="7" cy="8" r="6.500" fill="#2c2255"/><path d="M2.500 6h9M2.500 8h9M2.500 10h9" stroke="#f7f7ff" stroke-width="1"/><path d="M1 11c2 4 8 5 11 2" stroke="#f7941e" fill="none"/></svg><span class="nm">eclipse - map/tools...</span></span>
  <span class="task t3"><svg width="14" height="16" viewBox="0 0 14 16"><path d="M1 1h9l3 3v11H1z" fill="#eee" stroke="#aaa"/><path d="M3 6h6M3 8h6M3 10h5M3 12h4" stroke="#555"/><path d="M7 10l5-7 2 1-5 7z" fill="#5a5a50"/></svg><span class="nm">ad_map_access_q...</span></span>
  <span class="task t4"><svg width="15" height="16" viewBox="0 0 28 30"><use href="#fox"/></svg><span class="nm">Qgis - ad_map_acc...</span></span>
  <span class="task t5"><svg width="14" height="12" viewBox="0 0 14 12"><path d="M0 2h5l1 1h8v9H0z" fill="#a3c47e"/></svg><span class="nm">images</span></span>
  <span class="task active"><svg width="18" height="19" viewBox="0 0 16 17"><use href="#q"/></svg><span class="nm">*Untitled Project ...</span></span>
  <span class="ws ws-on"><svg width="18" height="19" viewBox="0 0 16 17"><use href="#q"/></svg></span>
  <span class="ws"><svg width="15" height="14" viewBox="0 0 15 14"><use href="#term"/></svg></span>
  <span class="trash"><svg width="18" height="24" viewBox="0 0 18 24"><path d="M1 4h16l-2 20H3z" fill="#8d8b85"/><path d="M1 2h16v3H1z" fill="#b7b5ae"/><path d="M6 7v15M12 7v15" stroke="#6e6c66"/></svg></span>
</footer>
</body>
</html>
```

FILE: styles.css
```css
* { box-sizing: border-box; }
html, body { margin: 0; padding: 0; }
body {
  width: 1536px; height: 811px; overflow: hidden;
  font-family: "Noto Sans", "Open Sans", sans-serif;
  background: #f0eeea; color: #1c1c1c;
  display: flex; flex-direction: column;
}
.defs { position: absolute; }
.panel {
  height: 44px; flex: none; background: #3c3b37; border-bottom: 1px solid #55534e;
  display: flex; justify-content: space-between; align-items: center; color: #dfdbd2;
  padding-bottom: 1px;
}
.panel-left { display: flex; align-items: center; padding-left: 8px; }
.ubuntu { display: flex; }
.panel-text { font-size: 17.200px; color: #dfdbd2; text-shadow: 0 1px 1px #111; }
.panel-left > .panel-text { margin-left: 7px; }
.panel-fox { margin-left: 17px; margin-top: -2px; }
.panel-mid { display: flex; align-items: center; gap: 6px; margin-left: 161px; }
.panel-right { display: flex; align-items: center; gap: 18px; padding-right: 3px; }
.grip-v { margin-right: -6px; }
.clock { margin-left: -5px; }
.titlebar {
  height: 31px; flex: none; background: #403e39;
  display: flex; align-items: center; padding: 0 0 2px 16px; color: #dfdbd2;
}
.title-dot { width: 8px; height: 8px; border-radius: 50%; background: #b9b7b0; box-shadow: 0 0 0 2px #2c2b28; }
.title-text { margin-left: 16px; font-size: 18.100px; flex: 1; text-shadow: 0 1px 1px #111; }
.winbtns { display: flex; gap: 3px; padding-right: 11px; }
.winbtn { width: 15px; height: 15px; border-radius: 50%; background: #6b6a65; color: #2e2d2a; font: 11px/15px "Liberation Sans", sans-serif; text-align: center; }
.winbtn.close { background: #e95420; }
.menubar {
  height: 26px; flex: none; background: #f0eeea; border-bottom: 1px solid #d6d3cc;
  display: flex; align-items: center; padding: 0 0 2px 11px; gap: 16px; font-size: 17.400px; color: #1c1c1c;
}
.menubar u { text-underline-offset: 2px; }
.toolbar {
  height: 47px; flex: none; display: flex; align-items: center; padding-left: 8px;
  background: linear-gradient(#f7f5f1, #eeece8); border-bottom: 1px solid #c4c1bb;
}
.tb3 { height: 46px; background: linear-gradient(#f6f4f0, #f3f1ec); }
.grip { flex: none; margin: 0 3px 0 11px; }
.grip.start { margin-left: 0; }
.grip.near { margin-left: 10px; }
.grip.far { margin: 0 4px 0 12px; }
.grip.wide-r { margin: 0 6px 0 10px; }
.b { width: 41px; height: 38px; flex: none; display: flex; align-items: center; justify-content: center; border: 1px solid transparent; border-radius: 3px; }
.b svg { width: 32px; height: 32px; flex: none; }
.b.on { background: #d8d5cf; border-color: #b9b6af; }
.b.dim svg { opacity: .85; }
.b.tight { margin-right: -2px; }
.caret { width: 9px; height: 5px; flex: none; margin: 0 6px 0 1px; border: 4.500px solid transparent; border-top: 5px solid #3c3b37; border-bottom: 0; }
.tb1 .caret { margin-right: 5px; }
.caret.off { border-top-color: #c8c5be; }
.caret.pull { margin-right: 4px; }
.sep { width: 1px; height: 28px; background: #d6d3cc; flex: none; margin: 0 3px 0 4px; }
.sep.after { margin-left: 0; }
.sep.flush { margin: 0 0 0 3px; }
.sep.wide-l { margin-left: 8px; }
.more { width: 17px; font: 700 15px "DejaVu Sans", sans-serif; color: #000; text-align: center; flex: none; }
.more.first { margin-left: 19px; }
.tag-text { font: 700 10.500px "DejaVu Sans", sans-serif; }
.a-text { font: 14px "Noto Sans", sans-serif; fill: #333; }
.small-bold { font: 700 9px "DejaVu Sans", sans-serif; }
.info-text { font: italic 700 15px "Liberation Serif", serif; fill: #fff; }
.t-text { font: 700 21px "Liberation Serif", serif; fill: #555; }
.q-text { font: 18px "Liberation Sans", sans-serif; fill: #fff; }
.num-text { font: 10px "Liberation Mono", monospace; fill: #000; }
.eps-text { font: 20px "Liberation Serif", serif; fill: #ccc; }
.workspace { flex: 1; min-height: 0; display: flex; background: #eeece8; }
.dock { width: 307px; flex: none; display: flex; flex-direction: column; }
.dock-head { height: 25px; display: flex; justify-content: space-between; align-items: center; padding: 0 2px 0 4px; font-size: 17.200px; }
.dock-btns { display: flex; gap: 3px; margin-right: 1px; }
.dock-tools { height: 38px; display: flex; align-items: center; padding: 0 0 2px 8px; gap: 9px; }
.dock-tools svg { width: 24px; height: 24px; flex: none; }
.dock-tools svg.w { width: 28px; margin-right: -4px; }
.dock-tools svg.w.off { width: 38px; margin-right: 2px; }
.tree { flex: 1; margin: 0; padding: 0; list-style: none; background: #fff; border: 1px solid #b9b6af; font-size: 17.300px; }
.tree li { height: 23px; display: flex; align-items: center; padding-left: 10px; }
.arrow { width: 5px; height: 9px; flex: none; border: 4.500px solid transparent; border-left: 5px solid #555; border-right: 0; }
.cb { width: 17px; height: 17px; margin-left: 13px; flex: none; }
.lay { width: 17px; height: 17px; margin-left: 7px; flex: none; }
.tree span { margin-left: 8px; }
.splitter { width: 8px; flex: none; }
.canvas { flex: 1; min-width: 0; background: #fff; border: 1px solid #b9b6af; border-top-width: 2px; position: relative; }
.map { position: absolute; left: -1px; top: 0; width: 1221px; height: 505px; }
.status { height: 35px; flex: none; display: flex; align-items: center; background: #eeece8; font-size: 14.400px; padding-left: 4px; color: #222; }
.locator { width: 327px; height: 29px; flex: none; background: #fff; border: 1px solid #bdbab3; border-radius: 3px; display: flex; align-items: center; padding-left: 8px; gap: 7px; color: #777; font-size: 17.600px; }
.ready { margin-left: 8px; width: 146px; flex: none; }
.lbl { flex: none; }
.coord-l { margin-right: 3px; }
.field { height: 26px; background: #fff; border: 1px solid #bdbab3; border-radius: 3px; display: flex; align-items: center; padding-left: 3px; flex: none; white-space: nowrap; font-size: 14.700px; }
.coord { width: 148px; }
.mouse { margin: 0 13px 0 4px; flex: none; }
.scale { width: 117px; margin-left: 4px; justify-content: space-between; }
.combo { width: 21px; height: 24px; border-left: 1px solid #d6d3cc; position: relative; }
.combo::after { content: ""; position: absolute; left: 6px; top: 10px; border: 4px solid transparent; border-top: 5px solid #555; border-bottom: 0; }
.lock { margin: 0 9px 0 11px; flex: none; }
.spin { justify-content: space-between; }
.magn { width: 105px; margin-left: 4px; }
.rota { width: 101px; margin-left: 10px; }
.rot { margin-left: 10px; }
.spinner { width: 17px; height: 24px; border-left: 1px solid #d6d3cc; position: relative; }
.spinner::before { content: ""; position: absolute; left: 4px; top: 5px; border: 4px solid transparent; border-bottom: 5px solid #555; border-top: 0; }
.spinner::after { content: ""; position: absolute; left: 4px; bottom: 5px; border: 4px solid transparent; border-top: 5px solid #555; border-bottom: 0; }
.rcb { margin-left: 7px; flex: none; }
.render { margin-left: 6px; }
.crs { margin-left: 19px; flex: none; }
.epsg { margin-left: 6px; }
.msg { margin-left: 21px; flex: none; }
.taskbar { height: 28px; flex: none; background: #3c3b37; display: flex; align-items: center; color: #dfdbd2; font-size: 18px; }
.showdesk { width: 21px; height: 19px; background: #9bbb6b; border-left: 1px solid #dfe8c8; margin-left: 1px; flex: none; }
.tgrip { margin: 0 7px 0 3px; flex: none; }
.task { display: flex; align-items: center; height: 28px; flex: none; white-space: nowrap; }
.nm { margin-left: 8px; }
.t1 { width: 211px; }
.t1 .nm { margin-left: 9px; }
.t2 { width: 210px; }
.t2 .nm { margin-left: 9px; }
.t3 { width: 212px; }
.t3 .nm { margin-left: 10px; }
.t4 { width: 211px; }
.t5 { width: 205px; }
.active { width: 211px; background: #2d2c29; padding-left: 2px; }
.ws { width: 53px; height: 28px; display: flex; align-items: center; justify-content: center; border: 1px solid #dfdbd2; flex: none; }
.ws-on { background: #a5bd7c; }
.trash { margin-left: auto; margin-right: 3px; display: flex; }
```
